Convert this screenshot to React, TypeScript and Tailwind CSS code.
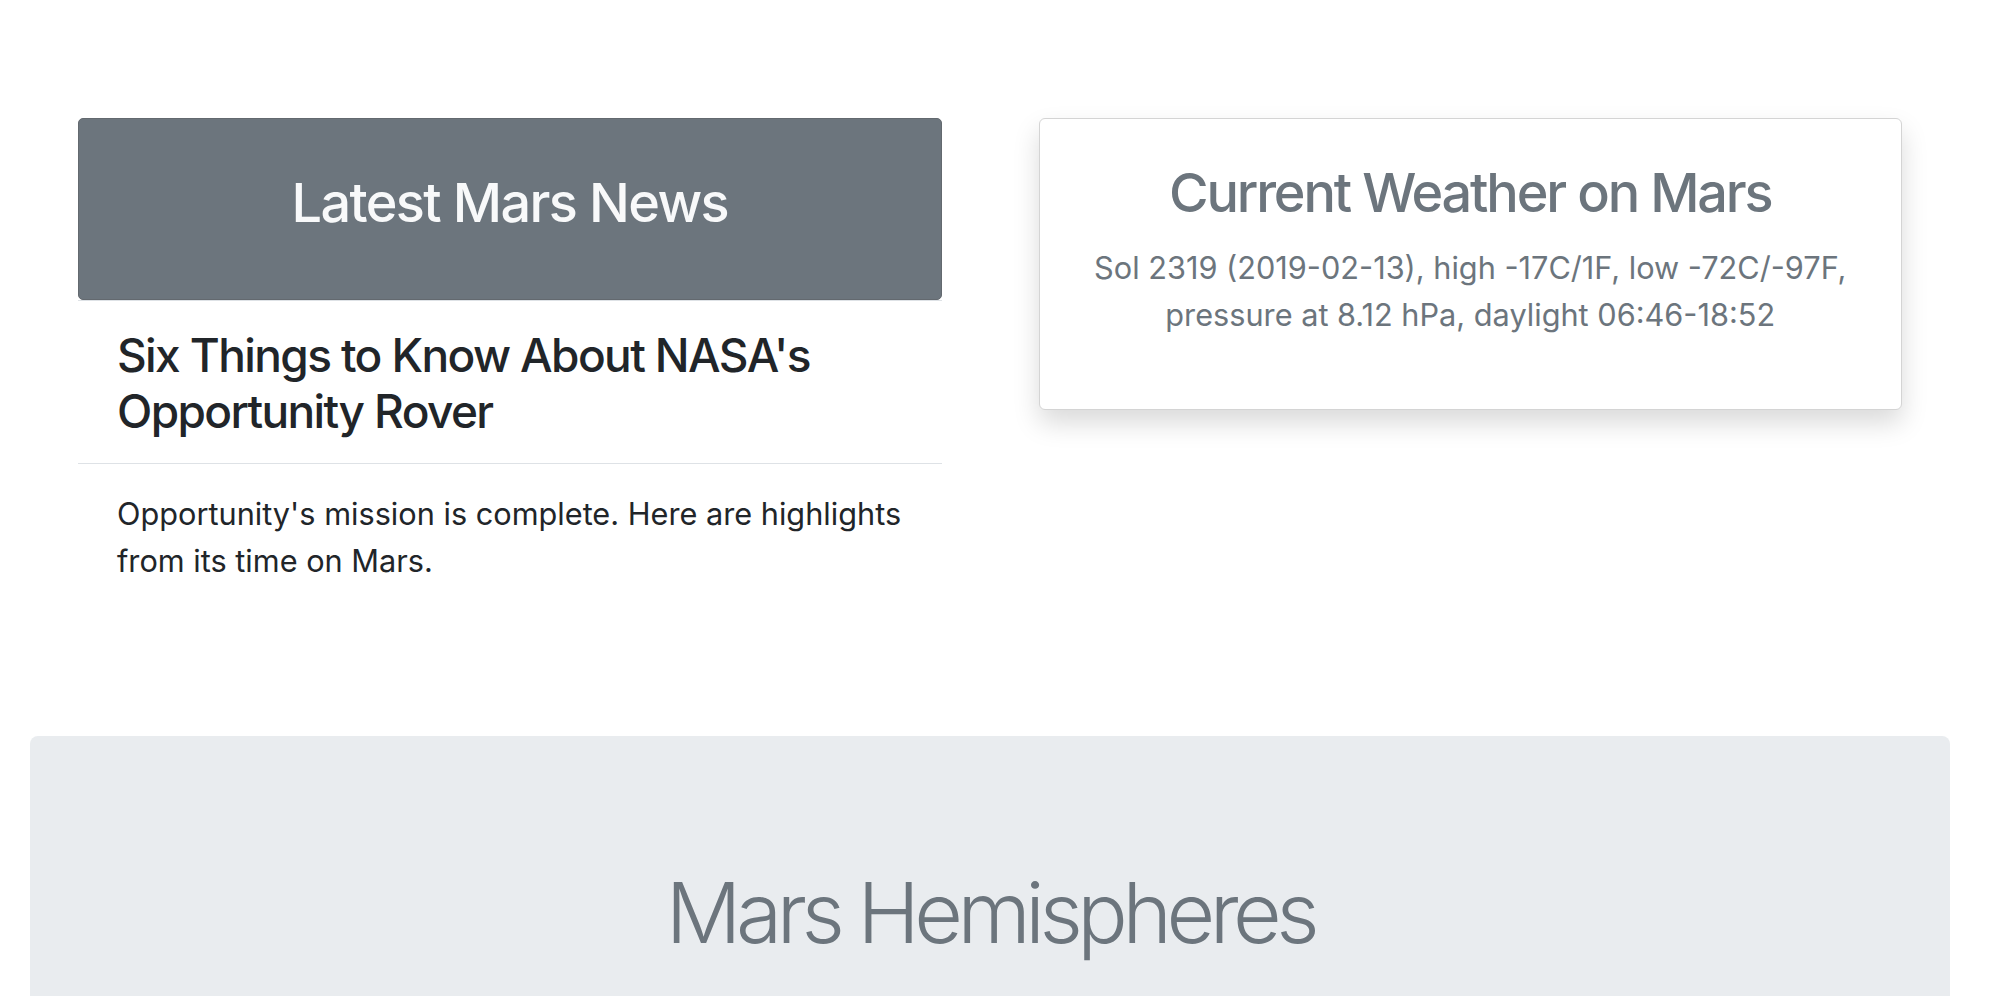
const news = {
  title: "Six Things to Know About NASA's Opportunity Rover",
  teaser: "Opportunity's mission is complete. Here are highlights from its time on Mars.",
};

const weather =
  "Sol 2319 (2019-02-13), high -17C/1F, low -72C/-97F, pressure at 8.12 hPa, daylight 06:46-18:52";

export default function App() {
  return (
    <div className="min-h-screen bg-white font-['Inter','Liberation_Sans',sans-serif] text-[#212529]">
      <div className="pl-[30px] pr-[42px]">
        {/* top row: news + weather */}
        <div className="grid grid-cols-2 gap-[97px] px-[48px] pt-[118px]">
          <div>
            <div className="flex h-[182px] items-center justify-center rounded-[5px] border border-[#63696f] bg-[#6c757d] pb-[14px]">
              <h2 className="text-[54px] font-medium leading-[65px] tracking-[-0.03em] text-[#f8f9fa]">
                Latest Mars News
              </h2>
            </div>
            <div className="border-t border-[#dee2e6] px-[39px] pt-[26px] pb-[24px]">
              <h3 className="text-[46px] font-medium leading-[56px] tracking-[-0.035em]">
                {news.title}
              </h3>
            </div>
            <div className="border-t border-[#dee2e6] px-[39px] pt-[26px]">
              <p className="text-[30.7px] leading-[47px]">{news.teaser}</p>
            </div>
          </div>

          <div className="self-start h-[292px] rounded-[6px] border border-[#d4d4d4] bg-white px-[36px] pt-[41px] text-center shadow-[0_13px_27px_rgba(0,0,0,0.15)]">
            <h2 className="text-[54px] font-medium leading-[65px] tracking-[-0.04em] text-[#6c757d]">
              Current Weather on Mars
            </h2>
            <p className="mt-[19px] text-[30.7px] leading-[47px] text-[#6c757d]">{weather}</p>
          </div>
        </div>

        {/* hemispheres */}
        <div className="mt-[152px] h-[700px] rounded-[8px] bg-[#e9ecef] pt-[126px] text-center">
          <h1 className="text-[84px] font-light leading-[101px] tracking-[-0.065em] text-[#6c757d]">
            Mars Hemispheres
          </h1>
        </div>
      </div>
    </div>
  );
}
